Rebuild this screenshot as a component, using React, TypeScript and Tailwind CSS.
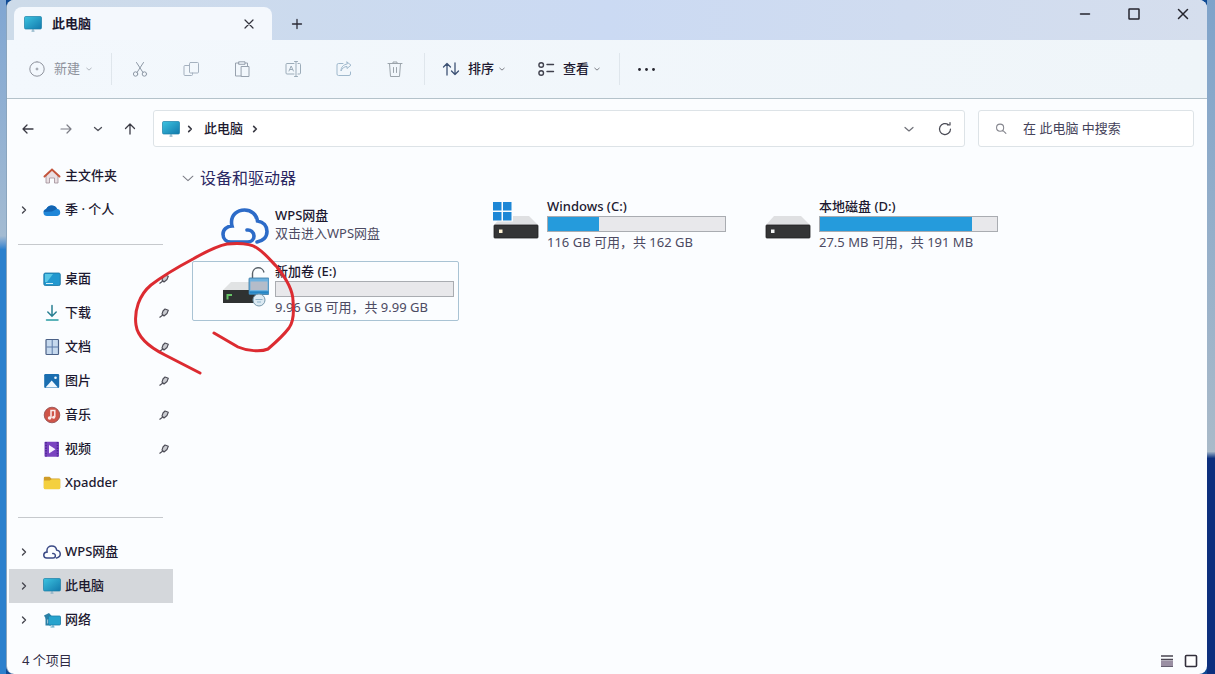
import { ReactNode } from "react";

type IconProps = { className?: string };

type NavItem = {
  label: string;
  icon: ReactNode;
  expandable?: boolean;
  pinned?: boolean;
  selected?: boolean;
};

type Drive = {
  name: string;
  detail: string;
  icon: ReactNode;
  used?: number;
  selected?: boolean;
};

function Line({ d, className, width = 1.2, size = 18 }: { d: string; className?: string; width?: number; size?: number }) {
  return (
    <svg
      viewBox="0 0 18 18"
      width={size}
      height={size}
      className={className}
      fill="none"
      stroke="currentColor"
      strokeWidth={width}
      strokeLinecap="round"
      strokeLinejoin="round"
      aria-hidden="true"
    >
      <path d={d} />
    </svg>
  );
}

function MonitorIcon({ className = "size-[18px]" }: IconProps) {
  return (
    <svg viewBox="0 0 18 18" className={className} aria-hidden="true">
      <defs>
        <linearGradient id="screen" x1="0" y1="0" x2="1" y2="1">
          <stop offset="0" stopColor="#3cc3e0" />
          <stop offset="1" stopColor="#1279ac" />
        </linearGradient>
      </defs>
      <path d="M7.500 16.200h3M9 14v2" stroke="#8fb4c8" strokeWidth="1.2" />
      <rect x="0.5" y="1.5" width="17" height="12.5" rx="1.2" fill="url(#screen)" stroke="#1b7fa8" strokeWidth="0.7" />
    </svg>
  );
}

function HomeIcon() {
  return (
    <svg viewBox="0 0 18 18" className="size-[18px]" aria-hidden="true">
      <path d="M3 8.5 9 3l6 5.500V16h-3.500v-5h-5v5H3z" fill="#e9dfe3" stroke="#a08d97" strokeWidth="0.8" />
      <path d="M1.500 9.500 9 2.500l7.500 7" fill="none" stroke="#c4553c" strokeWidth="2" strokeLinecap="round" />
    </svg>
  );
}

function OneDriveIcon() {
  return (
    <svg viewBox="0 0 18 18" className="size-[18px]" aria-hidden="true">
      <path d="M4 15a3.600 3.600 0 0 1-.8-7.100A6 6 0 0 1 14 7.700 3.700 3.700 0 0 1 14.200 15z" fill="#1f86d8" />
      <path d="M3.200 7.900A6 6 0 0 1 14 7.700L9 10.500l-8.300.5A3.700 3.700 0 0 1 3.200 7.900z" fill="#1263b2" />
    </svg>
  );
}

function DesktopIcon() {
  return (
    <svg viewBox="0 0 18 18" className="size-[18px]" aria-hidden="true">
      <rect x="0.8" y="3" width="16.500" height="12.500" rx="1.500" fill="#2298cf" stroke="#18729f" strokeWidth="0.8" />
      <path d="M2 4h8l-6 8H2z" fill="#58c6e6" />
      <path d="M3 13.500h7" stroke="#d6f2fa" strokeWidth="1" />
    </svg>
  );
}

function DownloadIcon() {
  return (
    <svg viewBox="0 0 18 18" className="size-[18px]" fill="none" strokeWidth="1.500" strokeLinecap="round" aria-hidden="true">
      <path d="M9 1.500V12M4.800 8 9 12.200 13.200 8" stroke="#297f92" />
      <path d="M3.500 16h11.500" stroke="#279aa2" />
    </svg>
  );
}

function DocumentIcon() {
  return (
    <svg viewBox="0 0 18 18" className="size-[18px]" aria-hidden="true">
      <rect x="3" y="1.500" width="12.500" height="15" rx="0.8" fill="#c6d9ee" stroke="#4b6187" strokeWidth="1.200" />
      <path d="M9.200 2v14M3.500 9h12" stroke="#5d7ba8" strokeWidth="1" />
    </svg>
  );
}

function PictureIcon() {
  return (
    <svg viewBox="0 0 18 18" className="size-[18px]" aria-hidden="true">
      <rect x="1.200" y="2" width="15" height="14" rx="1.200" fill="#1a6eb0" />
      <path d="m2.500 15.500 6.200-7 6.200 7z" fill="#f1f9ff" />
      <circle cx="12.500" cy="5.800" r="1.300" fill="#f1f9ff" />
    </svg>
  );
}

function MusicIcon() {
  return (
    <svg viewBox="0 0 18 18" className="size-[18px]" aria-hidden="true">
      <circle cx="9" cy="9" r="7.800" fill="#cf5549" stroke="#8e4a4d" strokeWidth="0.8" />
      <path d="M8 12V4.500h3.800V11" fill="none" stroke="#fbeceb" strokeWidth="1.500" />
      <circle cx="6.600" cy="12" r="1.800" fill="#fbeceb" />
      <circle cx="10.600" cy="11.300" r="1.500" fill="#fbeceb" />
    </svg>
  );
}

function VideoIcon() {
  return (
    <svg viewBox="0 0 18 18" className="size-[18px]" aria-hidden="true">
      <rect x="1.500" y="1.800" width="14.500" height="15" rx="0.8" fill="#7a44c0" />
      <path d="M3 2v14.500M14.500 2v14.500" stroke="#4b2791" strokeWidth="1.600" strokeDasharray="1.500 1.200" />
      <path d="m6 5 6.500 4.200-6.500 4.200z" fill="#f6efff" />
    </svg>
  );
}

function FolderIcon() {
  return (
    <svg viewBox="0 0 18 18" className="size-[18px]" aria-hidden="true">
      <path d="M0.800 4A1.200 1.200 0 0 1 2 2.800h4.500l2 1.700H16A1.200 1.200 0 0 1 17.200 6v8H0.800z" fill="#cf9c28" />
      <path d="M0.800 6.500h6l2-1.200h8.400V14a1.200 1.200 0 0 1-1.200 1.200H2A1.200 1.200 0 0 1 0.800 14z" fill="#f4d03f" />
    </svg>
  );
}

function NetworkIcon() {
  return (
    <svg viewBox="0 0 18 18" className="size-[18px]" aria-hidden="true">
      <path d="M1 4.500 6 2l3.500 4-6 3z" fill="#2b7fa5" />
      <path d="M3.500 7v6.500H8" stroke="#2b7fa5" strokeWidth="2" fill="none" />
      <rect x="5.500" y="5" width="12" height="9" rx="1" fill="#27a3cd" stroke="#1b7eaa" strokeWidth="0.800" />
      <path d="M7.500 16h4M10 14v2" stroke="#58a6c4" strokeWidth="1.200" />
    </svg>
  );
}

function CloudIcon({ className, color, width }: { className: string; color: string; width: number }) {
  return (
    <svg viewBox="0 0 48 36" className={className} fill="none" stroke={color} strokeWidth={width} strokeLinecap="round" aria-hidden="true">
      <path d="M36 34c5.500-1 10-4.500 10-10.500 0-5.500-3.500-9.500-9.500-10.500C35.500 6.500 30.500 2 23.500 2 16 2 10.500 7 10.500 14c0 1.800.2 3 .5 4-5 .3-9 3.500-9 8.200C2 31 5.500 34 10 34h16.500c3.500 0 6.500-2.500 6.500-6 0-4-3.500-6.500-7-6" />
    </svg>
  );
}

function DriveBody() {
  return (
    <>
      <path d="M9 14h27l9 9H1z" fill="#dfe0e2" />
      <rect x="1" y="23" width="44" height="13" rx="0.800" fill="#343536" stroke="#1f2021" strokeWidth="0.800" />
    </>
  );
}

function WindowsDriveIcon() {
  return (
    <svg viewBox="0 0 48 48" className="size-12" aria-hidden="true">
      <DriveBody />
      <path d="M0 0h20v19.500H0z" fill="#fbfdff" />
      <path d="M0 0h8.500v8.500H0zM10 0h8.500v8.500H10zM0 10h8.500v8.500H0zM10 10h8.500v8.500H10z" fill="#1d87d6" />
      <rect x="6" y="27.500" width="3.500" height="3.500" fill="#fff3d6" />
    </svg>
  );
}

function DiskIcon() {
  return (
    <svg viewBox="0 0 48 48" className="size-12" aria-hidden="true">
      <DriveBody />
      <rect x="6" y="27.500" width="3.500" height="3.500" fill="#f3f6f6" />
    </svg>
  );
}

function UnlockedDriveIcon() {
  return (
    <svg viewBox="0 0 48 48" className="size-12" aria-hidden="true">
      <path d="M10 15h28v8H2z" fill="#e1e3e4" />
      <rect x="2" y="23" width="38" height="13" fill="#2f3232" />
      <path d="M6.500 32.500V28H11" stroke="#67c467" strokeWidth="2" fill="none" />
      <path d="M31.500 11V6.500A5.800 5.800 0 0 1 43 5.500" fill="none" stroke="#596169" strokeWidth="1.400" />
      <rect x="28" y="11" width="20" height="16.500" rx="0.800" fill="#6eb2df" stroke="#34749f" strokeWidth="0.800" />
      <rect x="29.500" y="14.500" width="17" height="8.500" fill="#b4bcc9" />
      <path d="M28.500 25.500h19" stroke="#2585c4" strokeWidth="2.500" />
      <circle cx="38" cy="33" r="6" fill="#dbe9f2" stroke="#7798ab" strokeWidth="1" />
      <path d="M34.500 32.500h7M36 35h4" stroke="#8fb3c8" strokeWidth="1" fill="none" />
    </svg>
  );
}

function PinIcon() {
  return (
    <svg viewBox="0 0 12 12" className="size-3" fill="#c9cbd0" stroke="#4d4d57" strokeWidth="1.100" strokeLinejoin="round" aria-hidden="true">
      <path d="M7 2 10.300 3.200 9 6.500 6 9 4 7 5 4zM4.500 8.200 1.500 10.500" />
    </svg>
  );
}

const chevronRight = "M7.500 6 10.500 9l-3 3";
const chevronDown = "M5 7.500 9 11l4-3.500";

const homeItems: NavItem[] = [
  { label: "主文件夹", icon: <HomeIcon /> },
  { label: "季 · 个人", icon: <OneDriveIcon />, expandable: true },
];

const quickItems: NavItem[] = [
  { label: "桌面", icon: <DesktopIcon />, pinned: true },
  { label: "下载", icon: <DownloadIcon />, pinned: true },
  { label: "文档", icon: <DocumentIcon />, pinned: true },
  { label: "图片", icon: <PictureIcon />, pinned: true },
  { label: "音乐", icon: <MusicIcon />, pinned: true },
  { label: "视频", icon: <VideoIcon />, pinned: true },
  { label: "Xpadder", icon: <FolderIcon /> },
];

const deviceItems: NavItem[] = [
  { label: "WPS网盘", icon: <CloudIcon className="h-[14px] w-[18px]" color="#3b4a86" width={4} />, expandable: true },
  { label: "此电脑", icon: <MonitorIcon />, expandable: true, selected: true },
  { label: "网络", icon: <NetworkIcon />, expandable: true },
];

const drives: Drive[] = [
  { name: "WPS网盘", detail: "双击进入WPS网盘", icon: <CloudIcon className="h-9 w-12" color="#2c6bc8" width={3.6} /> },
  { name: "Windows (C:)", detail: "116 GB 可用，共 162 GB", icon: <WindowsDriveIcon />, used: 29 },
  { name: "本地磁盘 (D:)", detail: "27.5 MB 可用，共 191 MB", icon: <DiskIcon />, used: 86 },
  { name: "新加卷 (E:)", detail: "9.96 GB 可用，共 9.99 GB", icon: <UnlockedDriveIcon />, used: 0, selected: true },
];

const editActions = [
  { label: "剪切", d: "M5.500 2.500 12 12.500M12.500 2.500 6 12.500M6.800 14a2.200 2.200 0 1 1-4.400 0 2.200 2.200 0 0 1 4.400 0M15.600 14a2.200 2.200 0 1 1-4.400 0 2.200 2.200 0 0 1 4.400 0", color: "text-[#8d98a5]" },
  { label: "复制", d: "M8.500 2.500h7a1 1 0 0 1 1 1v8.500a1 1 0 0 1-1 1h-7a1 1 0 0 1-1-1V3.500a1 1 0 0 1 1-1M7.500 5.500H3a1 1 0 0 0-1 1V14.500a1 1 0 0 0 1 1h6.500a1 1 0 0 0 1-1V13", color: "text-[#a5b1bf]" },
  { label: "粘贴", d: "M6 3H2.500v13H8M12 3h2.500v3M6 1.800h6v2.500H6zM8.500 6.500h7.500V16.500H8.500z", color: "text-[#98a2ae]" },
  { label: "重命名", d: "M10 3.500H3a1 1 0 0 0-1 1v8.500a1 1 0 0 0 1 1h7M14 3.500h1.500a1 1 0 0 1 1 1v8.500a1 1 0 0 1-1 1H14M12 1.500v15M10.500 1.500h3M10.500 16.500h3M5 11l2.200-5 2.200 5M6 9.500h2.500", color: "text-[#9cacb9]" },
  { label: "共享", d: "M8 3.500H3.500A1.500 1.500 0 0 0 2 5v9a1.500 1.500 0 0 0 1.500 1.500h10.500a1.500 1.500 0 0 0 1.500-1.500v-2M12 2l4 3.200L12 8.500V6.500C9 6.500 7 8.500 6 11c0-4 2.500-6.500 6-7z", color: "text-[#9fb8cc]" },
  { label: "删除", d: "M2 3.500h14M7 3.500V2h4v1.500M3.500 3.500l1 13h9l1-13M7.500 7.500v5M10.500 7.500v5", color: "text-[#9ba4ab]" },
];

function NavRow({ item }: { item: NavItem }) {
  return (
    <li className="ml-0.5">
      <button
        type="button"
        className={`flex h-[34px] w-full items-center pl-1.5 pr-[3px] text-[13px] text-[#1d1930] ${item.selected ? "bg-[#d4d7db]" : ""}`}
      >
        <span className="flex w-7 shrink-0">
          {item.expandable && <Line d={chevronRight} width={1.4} className="text-[#45464f]" />}
        </span>
        <span className="flex w-[18px] shrink-0 justify-center">{item.icon}</span>
        <span className="ml-1 flex-1 text-left font-medium">{item.label}</span>
        {item.pinned && <PinIcon />}
      </button>
    </li>
  );
}

function NavSeparator() {
  return (
    <li className="flex h-[35px] items-center pl-[11px] pr-2.5" role="separator">
      <span className="h-px w-full bg-[#c6c9cd]" />
    </li>
  );
}

function DriveTile({ drive }: { drive: Drive }) {
  return (
    <button
      type="button"
      className={`flex h-[60px] items-center rounded-[2px] border pl-7 pr-1 text-left text-[13px] leading-4 ${
        drive.selected ? "border-[#a9c3d4]" : "border-transparent"
      }`}
    >
      <span className="flex h-12 w-12 shrink-0 items-center">{drive.icon}</span>
      <span className="ml-1.5 flex min-w-0 flex-1 flex-col gap-0.5 pb-1">
        <span className="font-medium text-[#1d1930]">{drive.name}</span>
        {drive.used !== undefined && (
          <span className="block h-4 w-full border border-[#a9acb1] bg-[#e8e8eb]">
            <span className="block h-full bg-[#259bdc]" style={{ width: `${drive.used}%` }} />
          </span>
        )}
        <span className="whitespace-nowrap text-[#4c4a62]">{drive.detail}</span>
      </span>
    </button>
  );
}

function TitleBar() {
  return (
    <header className="flex h-10 items-end bg-linear-to-r from-[#cddbe9] via-[#cbdaf3] to-[#d5deed]">
      <div className="ml-[7px] flex h-[33px] w-[258px] items-center rounded-t-lg bg-[#f4f8fd] pl-2.5 pr-3.5">
        <MonitorIcon />
        <span className="ml-2.5 flex-1 text-[13px] font-bold text-[#1d1930]">此电脑</span>
        <button type="button" aria-label="关闭标签页">
          <Line d="M5 5l8 8M13 5l-8 8" className="text-[#33333d]" />
        </button>
      </div>
      <button type="button" aria-label="新标签页" className="flex h-[33px] w-[50px] items-center justify-center">
        <Line d="M9 4.500v9M4.500 9h9" width={1.3} className="text-[#2b2b36]" />
      </button>
      <div className="ml-auto flex self-start">
        <button type="button" aria-label="最小化" className="flex h-7 w-[49px] items-center justify-center">
          <Line d="M4.500 9h9" width={1.5} className="text-[#25252e]" />
        </button>
        <button type="button" aria-label="最大化" className="flex h-7 w-[49px] items-center justify-center">
          <Line d="M4.500 4h9a.5.5 0 0 1 .5.5v9a.5.5 0 0 1-.5.5h-9a.5.5 0 0 1-.5-.5v-9a.5.5 0 0 1 .5-.5" width={1.5} className="text-[#25252e]" />
        </button>
        <button type="button" aria-label="关闭" className="flex h-7 w-[49px] items-center justify-center">
          <Line d="M4.500 4.500l9 9M13.500 4.500l-9 9" width={1.5} className="text-[#25252e]" />
        </button>
      </div>
    </header>
  );
}

function Toolbar() {
  return (
    <div className="flex h-[59px] items-center border-b border-[#b4c2ca] bg-linear-to-r from-[#f3f8fd] to-[#eff5f9] pl-[21px] text-[13px] text-[#1d1930]">
      <button type="button" className="flex items-center text-[#8e929c]">
        <Line d="M9 1.800a7.200 7.200 0 1 1 0 14.400 7.200 7.200 0 0 1 0-14.400M9 8v2M8 9h2" width={1} />
        <span className="ml-2">新建</span>
        <Line d={chevronDown} size={10} className="ml-1" />
      </button>
      <span className="ml-[17px] h-8 w-px bg-[#dfe6ec]" />
      <div className="flex">
        {editActions.map((action) => (
          <button key={action.label} type="button" aria-label={action.label} className="flex w-[51px] justify-center py-2 first:ml-0.5">
            <Line d={action.d} width={1} className={action.color} />
          </button>
        ))}
      </div>
      <span className="ml-1 h-8 w-px bg-[#dfe6ec]" />
      <button type="button" className="ml-[17px] flex items-center font-medium">
        <Line d="M5 15V3.500M1.500 7 5 3.500 8.500 7M13 3v11.500M9.500 11l3.500 3.500 3.500-3.500" width={1.3} className="text-[#3d5274]" />
        <span className="ml-2">排序</span>
        <Line d={chevronDown} size={10} width={1.6} className="ml-[3px] text-[#6d7078]" />
      </button>
      <button type="button" className="ml-[30px] flex items-center font-medium">
        <Line
          d="M6.500 5a2.300 2.300 0 1 1-4.600 0 2.300 2.300 0 0 1 4.600 0M6.500 13a2.300 2.300 0 1 1-4.600 0 2.300 2.300 0 0 1 4.600 0M10 4.500h6.500M10 11.500h6.500"
          width={1.4}
          className="text-[#40414d]"
        />
        <span className="ml-2">查看</span>
        <Line d={chevronDown} size={10} width={1.6} className="ml-[3px] text-[#6d7078]" />
      </button>
      <span className="ml-[17px] h-8 w-px bg-[#dfe6ec]" />
      <button type="button" aria-label="更多" className="ml-4 flex">
        <svg viewBox="0 0 20 18" className="h-[18px] w-5" fill="#25252e" aria-hidden="true">
          <circle cx="3.500" cy="9.500" r="1.400" />
          <circle cx="10.500" cy="9.500" r="1.400" />
          <circle cx="17.500" cy="9.500" r="1.400" />
        </svg>
      </button>
    </div>
  );
}

function AddressRow() {
  return (
    <div className="flex h-[60px] items-center pb-px pl-3 pr-[13px] text-[13px] text-[#1d1930]">
      <button type="button" aria-label="后退" className="mr-5">
        <Line d="M14 9H4M8 5 4 9l4 4" width={1.3} className="text-[#3a3a44]" />
      </button>
      <button type="button" aria-label="前进" className="mr-3.5">
        <Line d="M4 9h10M10 5l4 4-4 4" className="text-[#7b7c85]" />
      </button>
      <button type="button" aria-label="最近浏览的位置" className="mr-3.5">
        <Line d="M5.500 7.500 9 10.500l3.500-3" width={1.3} className="text-[#50515a]" />
      </button>
      <button type="button" aria-label="向上" className="mr-3.5">
        <Line d="M9 14V4M4.500 8.500 9 4l4.500 4.500" width={1.3} className="text-[#3a3a44]" />
      </button>
      <nav aria-label="地址" className="flex h-[37px] min-w-0 flex-1 items-center rounded-[3px] border border-[#dde3e7] bg-white pl-2 pr-2.5">
        <MonitorIcon />
        <Line d={chevronRight} size={16} width={1.8} className="ml-0.5 text-[#3a3a44]" />
        <button type="button" className="ml-1.5 font-medium">此电脑</button>
        <Line d={chevronRight} size={16} width={1.8} className="ml-1 text-[#3a3a44]" />
        <button type="button" aria-label="展开" className="ml-auto">
          <Line d={chevronDown} className="text-[#6f7078]" />
        </button>
        <button type="button" aria-label="刷新" className="ml-[18px]">
          <Line d="M14.500 9A5.500 5.500 0 1 1 12.500 4.800M11.500 5h2.500V2.500" width={1.200} className="text-[#4a4b55]" />
        </button>
      </nav>
      <label className="ml-[13px] flex h-[37px] w-[216px] items-center rounded-[3px] border border-[#dde3e7] bg-white pl-3.5">
        <Line d="M12 7.500a4 4 0 1 1-8 0 4 4 0 0 1 8 0M11 10.500l3.500 3.500" size={16} className="text-[#85868e]" />
        <input
          type="search"
          aria-label="搜索"
          placeholder="在 此电脑 中搜索"
          className="ml-3.5 min-w-0 flex-1 bg-transparent outline-none placeholder:text-[#45435a]"
        />
      </label>
    </div>
  );
}

function StatusBar() {
  return (
    <footer className="flex h-[37px] items-center pl-[15px] pr-[9px] pt-2.5 text-[13px] text-[#2f2c45]">
      <span>4 个项目</span>
      <button type="button" aria-label="详细信息" className="ml-auto">
        <svg viewBox="0 0 14 14" className="size-3.5" aria-hidden="true">
          <path d="M1 2h12M1 5.500h12" stroke="#4a4652" strokeWidth="1.500" />
          <path d="M1 6.500h12V13H1z" fill="#9a8fa3" />
          <path d="M1 12.500h12" stroke="#655f70" strokeWidth="1" />
        </svg>
      </button>
      <button type="button" aria-label="大图标" className="ml-2.5">
        <svg viewBox="0 0 14 14" className="size-3.5" aria-hidden="true">
          <rect x="1.500" y="1.500" width="11" height="11" rx="1" fill="#fff" stroke="#322f3b" strokeWidth="1.600" />
        </svg>
      </button>
    </footer>
  );
}

// Freehand pen mark laid over the sidebar and the E: tile
function PenMark() {
  return (
    <svg viewBox="0 0 170 138" className="pointer-events-none absolute left-[124px] top-[80px] h-[138px] w-[170px]" fill="none" aria-hidden="true">
      <path
        d="M69 134 34 116C22 110 7 101 5 86 3 72 8 56 20 46 33 36 47 28 62 20 76 12 86 7 96 5 107 4 119 4 126 9 134 14 140 22 146 28 154 38 162 50 162 62 163 72 163 82 158 89 152 97 144 104 137 110 130 113 116 112 107 108L83 94"
        stroke="#dc2b31"
        strokeWidth="3"
        strokeLinecap="round"
        strokeLinejoin="round"
      />
    </svg>
  );
}

export default function App() {
  return (
    <div className="flex min-h-screen bg-[#0f4a94] font-['Noto_Sans','Noto_Sans_CJK_SC',sans-serif]">
      <div className="w-1.5 shrink-0 bg-linear-to-b from-[#80a6d2] from-0% via-[#a3bbd2] via-35% to-[#2b80cd] to-37%" />
      <div className="flex min-w-0 flex-1 flex-col overflow-hidden rounded-lg border-l border-[#8ba5bd] bg-[#fbfdff]">
        <TitleBar />
        <Toolbar />
        <AddressRow />
        <div className="relative flex flex-1">
          <aside className="w-[166px] shrink-0">
            <ul>
              {homeItems.map((item) => (
                <NavRow key={item.label} item={item} />
              ))}
              <NavSeparator />
              {quickItems.map((item) => (
                <NavRow key={item.label} item={item} />
              ))}
              <NavSeparator />
              {deviceItems.map((item) => (
                <NavRow key={item.label} item={item} />
              ))}
            </ul>
          </aside>
          <main className="min-w-0 flex-1 pl-[19px]">
            <h2 className="-ml-3 flex h-[37px] items-center text-base text-[#2b2863]">
              <Line d="M3.500 7 9 12l5.500-5" size={16} className="mr-1 text-[#7b7c85]" />
              设备和驱动器
            </h2>
            <div className="grid grid-cols-[repeat(auto-fill,267px)] gap-[5px]">
              {drives.map((drive) => (
                <DriveTile key={drive.name} drive={drive} />
              ))}
            </div>
          </main>
          <PenMark />
        </div>
        <StatusBar />
      </div>
      <div className="w-2 shrink-0 bg-linear-to-b from-[#7fa3ca] from-0% via-[#a9bac9] via-67% to-[#0c2f7e] to-68%" />
    </div>
  );
}
